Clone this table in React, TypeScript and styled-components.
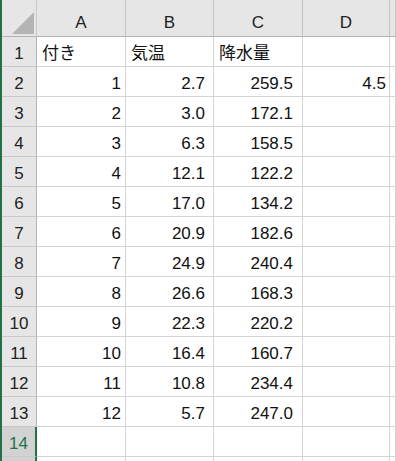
import styled, { createGlobalStyle } from "styled-components";

const GlobalStyle = createGlobalStyle`
  html, body {
    margin: 0;
    padding: 0;
    background: #ffffff;
    overflow: hidden;
  }
  body {
    font-family: "Liberation Sans", "Noto Sans CJK JP", sans-serif;
    color: #111111;
  }
`;

const GREEN = "#217346";

const Sheet = styled.div`
  display: grid;
  grid-template-columns: 35px 89px 88px 89px 87px 1fr;
  grid-auto-rows: 30px;
  grid-template-rows: 37px;
  width: 396px;
  height: 461px;
  border-left: 2px solid ${GREEN};
  box-sizing: border-box;
  overflow: hidden;
  font-size: 17px;
`;

const Corner = styled.div`
  display: flex;
  justify-content: flex-end;
  align-items: flex-end;
  padding: 0 2px 2px 0;
  background: #e6e6e6;
  border-right: 1px solid #c8c8c8;
  border-bottom: 1px solid #b4b4b4;
  box-sizing: border-box;
`;

const Triangle = styled.div`
  width: 22px;
  height: 22px;
  background: #b4b4b4;
  clip-path: polygon(100% 0, 100% 100%, 0 100%);
`;

const ColHeader = styled.div`
  display: flex;
  justify-content: center;
  align-items: flex-end;
  padding-bottom: 3px;
  line-height: 20px;
  background: #e6e6e6;
  border-right: 1px solid #c4c4c4;
  border-bottom: 1px solid #b4b4b4;
  box-sizing: border-box;
  color: #222222;
`;

const RowHeader = styled.div<{ $active?: boolean }>`
  display: flex;
  justify-content: center;
  align-items: flex-end;
  padding-bottom: 2px;
  line-height: 20px;
  background: ${(p) => (p.$active ? "#d2d2d2" : "#e6e6e6")};
  color: ${(p) => (p.$active ? GREEN : "#222222")};
  border-right: ${(p) => (p.$active ? `2px solid ${GREEN}` : "1px solid #b4b4b4")};
  border-bottom: 1px solid #c8c8c8;
  box-sizing: border-box;
`;

const Cell = styled.div<{ $num?: boolean; $pad?: number }>`
  display: flex;
  justify-content: ${(p) => (p.$num ? "flex-end" : "flex-start")};
  align-items: flex-end;
  padding: 0 ${(p) => (p.$num ? p.$pad ?? 4 : 0)}px 2px
    ${(p) => (p.$num ? 0 : 5)}px;
  line-height: 20px;
  white-space: nowrap;
  overflow: hidden;
  border-right: 1px solid #d4d4d4;
  border-bottom: 1px solid #d4d4d4;
  box-sizing: border-box;
`;

const columns = ["A", "B", "C", "D", ""];

const data: [number, string, string][] = [
  [1, "2.7", "259.5"],
  [2, "3.0", "172.1"],
  [3, "6.3", "158.5"],
  [4, "12.1", "122.2"],
  [5, "17.0", "134.2"],
  [6, "20.9", "182.6"],
  [7, "24.9", "240.4"],
  [8, "26.6", "168.3"],
  [9, "22.3", "220.2"],
  [10, "16.4", "160.7"],
  [11, "10.8", "234.4"],
  [12, "5.7", "247.0"],
];

const App = () => {
  return (
    <>
      <GlobalStyle />
      <Sheet>
        <Corner>
          <Triangle />
        </Corner>
        {columns.map((c, i) => (
          <ColHeader key={i}>{c}</ColHeader>
        ))}

        <RowHeader>1</RowHeader>
        <Cell>付き</Cell>
        <Cell>気温</Cell>
        <Cell>降水量</Cell>
        <Cell />
        <Cell />

        {data.map(([month, temp, rain], i) => (
          <>
            <RowHeader key={`h${i}`}>{i + 2}</RowHeader>
            <Cell $num $pad={4}>{month}</Cell>
            <Cell $num $pad={8}>{temp}</Cell>
            <Cell $num $pad={9}>{rain}</Cell>
            <Cell $num $pad={3}>{i === 0 ? "4.5" : ""}</Cell>
            <Cell />
          </>
        ))}

        <RowHeader $active>14</RowHeader>
        <Cell />
        <Cell />
        <Cell />
        <Cell />
        <Cell />

        <RowHeader $active />
        <Cell />
        <Cell />
        <Cell />
        <Cell />
        <Cell />
      </Sheet>
    </>
  );
};

export default App;
